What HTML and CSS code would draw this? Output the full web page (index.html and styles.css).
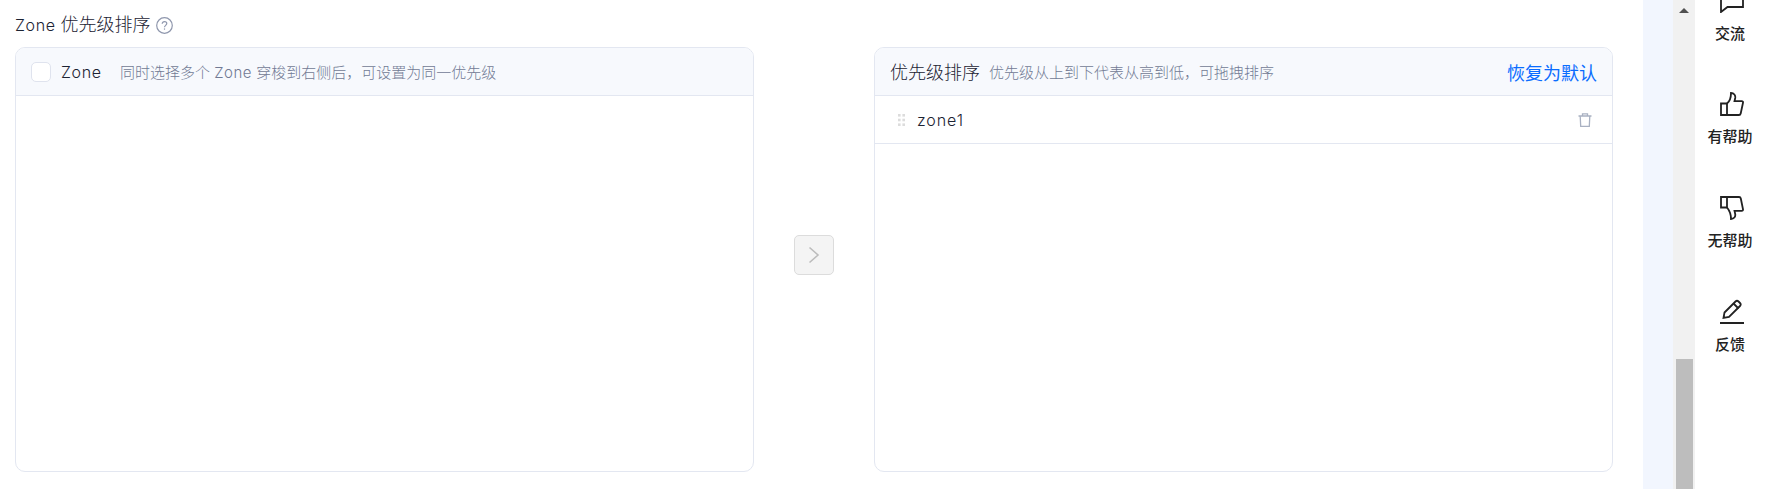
FILE: index.html
```html
<!DOCTYPE html>
<html lang="zh">
<head>
<meta charset="utf-8">
<title>Zone 优先级排序</title>
<link rel="stylesheet" href="styles.css">
</head>
<body>
<div class="page">
  <main class="main">
    <div class="title">
      <span><span class="latin">Zone</span> 优先级排序</span>
      <svg class="help" viewBox="0 0 17 17" width="17" height="17" fill="none" stroke="#8f97ad" stroke-width="1.2"><circle cx="8.500" cy="8.500" r="7.800"/><path d="M6.200 6.700C6.200 5.300 7.200 4.600 8.500 4.600s2.300.8 2.300 2c0 1.700-2.300 1.800-2.300 3.600"/><path d="M8.500 11.400v1.300"/></svg>
    </div>
    <div class="transfer">
      <section class="panel">
        <header class="panel-head">
          <span class="checkbox"></span>
          <span class="head-name latin">Zone</span>
          <span class="hint">同时选择多个 <span class="latin-small">Zone</span> 穿梭到右侧后&#xFF0C;可设置为同一优先级</span>
        </header>
      </section>
      <div class="mid">
        <button class="move" type="button" aria-label="移动">
          <svg viewBox="0 0 12 18" width="12" height="18" fill="none" stroke="#bcbcbc" stroke-width="1.6"><path d="M1.500 1.500 10 9l-8.500 7.500"/></svg>
        </button>
      </div>
      <section class="panel">
        <header class="panel-head">
          <span class="head-title">优先级排序</span>
          <span class="hint">优先级从上到下代表从高到低&#xFF0C;可拖拽排序</span>
          <a class="reset">恢复为默认</a>
        </header>
        <div class="row">
          <svg class="drag" viewBox="0 0 7 12" width="7" height="12" fill="#dcdcdc"><rect width="2.600" height="2.600"/><rect x="4.400" width="2.600" height="2.600"/><rect y="4.700" width="2.600" height="2.600"/><rect x="4.400" y="4.700" width="2.600" height="2.600"/><rect y="9.400" width="2.600" height="2.600"/><rect x="4.400" y="9.400" width="2.600" height="2.600"/></svg>
          <span class="row-name">zone1</span>
          <svg class="trash" viewBox="0 0 14 14" width="14" height="14" fill="none" stroke="#a9b1c2" stroke-width="1.300"><path d="M.5 3h13"/><path d="M4.500 3V.8h5V3"/><path d="M2.200 3l.5 10.300h8.600l.5-10.300"/></svg>
        </div>
      </section>
    </div>
  </main>
  <div class="strip"></div>
  <div class="scrollbar">
    <span class="arrow"></span>
    <span class="thumb"></span>
  </div>
  <aside class="rail">
    <div class="rail-list">
      <div class="rail-item">
        <svg viewBox="0 0 24 24" width="24" height="24" fill="none" stroke="#222" stroke-width="1.800"><path d="M1 1h22v17H7.500L1 23z"/><path d="M6.500 10h2M11 10h2M15.500 10h2" stroke-width="2"/></svg>
        <span>交流</span>
      </div>
      <div class="rail-item">
        <svg viewBox="0 0 24 24" width="24" height="24" fill="none" stroke="#222" stroke-width="1.800"><path d="M1 11.500h6v11.500H1z"/><path d="M7 11.500C9.500 9.500 11 6 11 1c3 0 4.700 2.200 4.200 5l-.7 3.200h7.200c1 0 1.500.7 1.300 1.600L20.700 21.500c-.2 1-.8 1.500-1.800 1.500H7"/></svg>
        <span>有帮助</span>
      </div>
      <div class="rail-item">
        <svg viewBox="0 0 24 24" width="24" height="24" fill="none" stroke="#222" stroke-width="1.800"><path d="M1 1h6v10.500H1z"/><path d="M7 1h12c1 0 1.600.5 1.800 1.500l2.200 10.700c.2.900-.3 1.600-1.300 1.600h-7.200l.7 3.200c.5 2.800-1.200 5-4.200 5 0-5-1.500-8.500-4-11.500"/></svg>
        <span>无帮助</span>
      </div>
      <div class="rail-item">
        <svg viewBox="0 0 24 25" width="24" height="25" fill="none" stroke="#222" stroke-width="1.800"><path d="M4.500 13.500 15.500 2.500c1-1 2-1 3 0l1.500 1.500c1 1 1 2 0 3L9 18l-5.500 1z"/><path d="M13.500 4.500l5 5"/><path d="M0 24h24" stroke-width="2"/></svg>
        <span>反馈</span>
      </div>
    </div>
  </aside>
</div>
</body>
</html>
```
FILE: styles.css
```css
* { box-sizing: border-box; }
html, body { margin: 0; height: 100%; background: #fff; overflow: hidden; }
body { font-family: Inter, "Noto Sans CJK SC", sans-serif; color: #1c2333; }

.page { display: grid; grid-template-columns: 1643px 30px 22px 70px; height: 489px; }

.main { padding: 14px 30px 18px 15px; display: flex; flex-direction: column; }
.title { display: flex; align-items: center; gap: 5px; height: 22px; font-size: 18px; font-weight: 300; line-height: 22px; margin-bottom: 11px; }
.latin { font-size: 16px; font-weight: 300; letter-spacing: .6px; }
.latin-small { font-size: 15px; font-weight: 300; letter-spacing: .5px; }
.help { display: block; }

.transfer { display: flex; height: 425px; }
.panel { flex: 1 1 0; min-width: 0; border: 1px solid #e3e7f1; border-radius: 10px; overflow: hidden; background: #fff; }
.panel-head { display: flex; align-items: center; height: 48px; padding: 0 15px; background: #f7f9fd; border-bottom: 1px solid #e3e7f1; }
.checkbox { width: 20px; height: 20px; border: 1px solid #dfe3ee; border-radius: 5px; background: #fff; margin-right: 10px; }
.head-name { width: 59px; }
.head-title { font-size: 18px; font-weight: 300; line-height: 22px; margin: 2px 9px 0 0; }
.hint { font-size: 15px; font-weight: 300; color: #717a94; }
.reset { margin-left: auto; font-size: 18px; font-weight: 400; color: #0a6cff; }

.mid { flex: 0 0 120px; display: flex; align-items: center; justify-content: center; padding-bottom: 10px; }
.move { width: 40px; height: 40px; padding: 0; display: flex; align-items: center; justify-content: center; background: #f4f4f4; border: 1px solid #dcdcdc; border-radius: 5px; }

.row { display: flex; align-items: center; height: 48px; padding: 0 20px 0 23px; border-bottom: 1px solid #e3e7f1; }
.drag { margin-right: 12px; }
.row-name { font-size: 16px; font-weight: 300; letter-spacing: .9px; }
.trash { margin-left: auto; }

.strip { background: #f2f6fe; }
.scrollbar { background: #f1f1f1; display: flex; flex-direction: column; align-items: center; justify-content: space-between; padding-top: 8px; }
.arrow { width: 0; height: 0; border-left: 5px solid transparent; border-right: 5px solid transparent; border-bottom: 5px solid #505050; }
.thumb { width: 17px; height: 131px; background: #bdbdbd; }

.rail { background: #fff; overflow: hidden; }
.rail-list { display: flex; flex-direction: column; margin-top: -11px; }
.rail-item { height: 103.4px; display: flex; flex-direction: column; align-items: center; font-size: 15px; font-weight: 500; color: #222; line-height: 20px; }
.rail-item svg { flex: none; margin: 0 0 11px 4px; }
```
